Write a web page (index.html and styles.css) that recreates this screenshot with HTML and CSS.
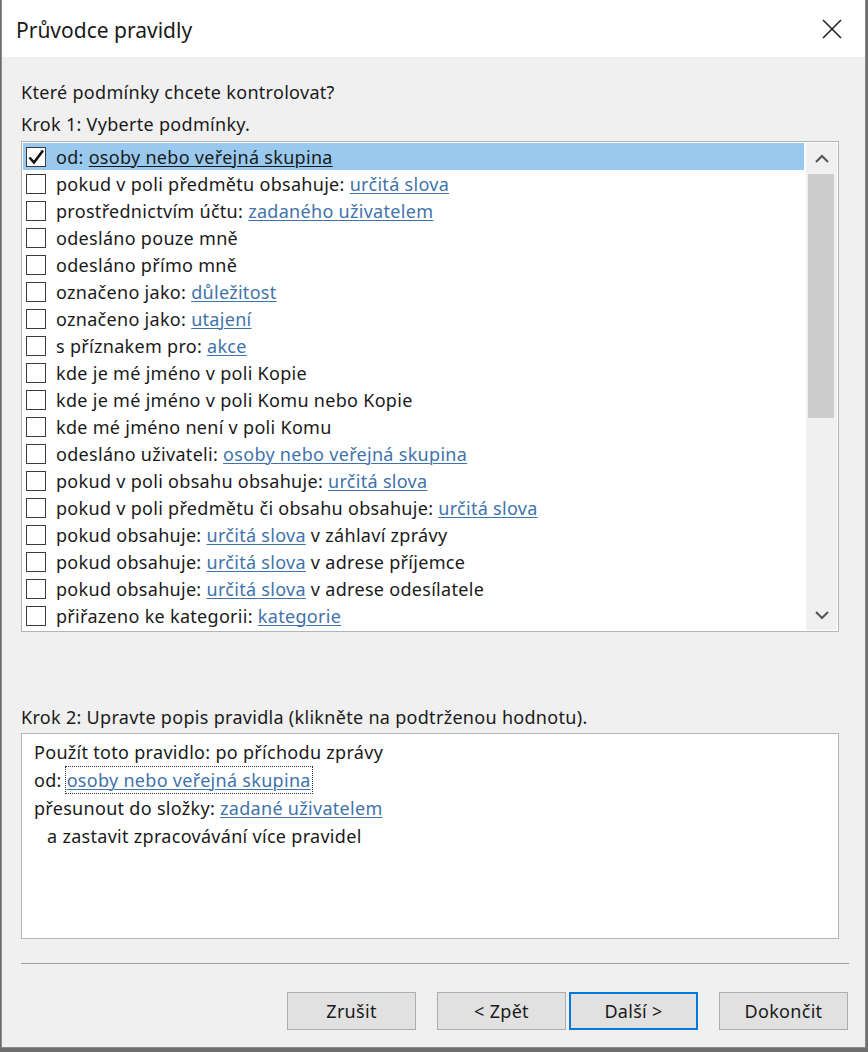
FILE: index.html
```html
<!DOCTYPE html>
<html lang="cs">
<head>
<meta charset="utf-8">
<title>Průvodce pravidly</title>
<link rel="stylesheet" href="styles.css">
</head>
<body>
<div class="window">
  <div class="titlebar">
    <span class="title">Průvodce pravidly</span>
    <svg class="close" width="20" height="20" viewBox="0 0 20 20"><path d="M1 1 L19 19 M19 1 L1 19" stroke="#1a1a1a" stroke-width="1.5" fill="none"/></svg>
  </div>
  <div class="content">
    <p class="label q">Které podmínky chcete kontrolovat?</p>
    <p class="label">Krok 1: Vyberte podmínky.</p>
    <div class="listbox">
      <ul class="rows">
        <li class="row selected"><span class="cb checked"><svg width="18" height="18" viewBox="0 0 18 18"><path d="M2.5 9.5 L7 14.5 L16 2.5" stroke="#111" stroke-width="2.6" fill="none"/></svg></span><span>od: <a class="lnk sel">osoby nebo veřejná skupina</a></span></li>
        <li class="row"><span class="cb"></span><span>pokud v poli předmětu obsahuje: <a class="lnk">určitá slova</a></span></li>
        <li class="row"><span class="cb"></span><span>prostřednictvím účtu: <a class="lnk">zadaného uživatelem</a></span></li>
        <li class="row"><span class="cb"></span><span>odesláno pouze mně</span></li>
        <li class="row"><span class="cb"></span><span>odesláno přímo mně</span></li>
        <li class="row"><span class="cb"></span><span>označeno jako: <a class="lnk">důležitost</a></span></li>
        <li class="row"><span class="cb"></span><span>označeno jako: <a class="lnk">utajení</a></span></li>
        <li class="row"><span class="cb"></span><span>s příznakem pro: <a class="lnk">akce</a></span></li>
        <li class="row"><span class="cb"></span><span>kde je mé jméno v poli Kopie</span></li>
        <li class="row"><span class="cb"></span><span>kde je mé jméno v poli Komu nebo Kopie</span></li>
        <li class="row"><span class="cb"></span><span>kde mé jméno není v poli Komu</span></li>
        <li class="row"><span class="cb"></span><span>odesláno uživateli: <a class="lnk">osoby nebo veřejná skupina</a></span></li>
        <li class="row"><span class="cb"></span><span>pokud v poli obsahu obsahuje: <a class="lnk">určitá slova</a></span></li>
        <li class="row"><span class="cb"></span><span>pokud v poli předmětu či obsahu obsahuje: <a class="lnk">určitá slova</a></span></li>
        <li class="row"><span class="cb"></span><span>pokud obsahuje: <a class="lnk">určitá slova</a> v záhlaví zprávy</span></li>
        <li class="row"><span class="cb"></span><span>pokud obsahuje: <a class="lnk">určitá slova</a> v adrese příjemce</span></li>
        <li class="row"><span class="cb"></span><span>pokud obsahuje: <a class="lnk">určitá slova</a> v adrese odesílatele</span></li>
        <li class="row"><span class="cb"></span><span>přiřazeno ke kategorii: <a class="lnk">kategorie</a></span></li>
      </ul>
      <div class="scrollbar">
        <div class="arrow"><svg width="16" height="10" viewBox="0 0 16 10"><path d="M2 8 L8 2 L14 8" stroke="#555" stroke-width="2" fill="none"/></svg></div>
        <div class="track"><div class="thumb"></div></div>
        <div class="arrow"><svg width="16" height="10" viewBox="0 0 16 10"><path d="M2 2 L8 8 L14 2" stroke="#555" stroke-width="2" fill="none"/></svg></div>
      </div>
    </div>
    <p class="label step2">Krok 2: Upravte popis pravidla (klikněte na podtrženou hodnotu).</p>
    <div class="desc">
      <div class="dline">Použít toto pravidlo: po příchodu zprávy</div>
      <div class="dline">od: <a class="lnk focus">osoby nebo veřejná skupina</a></div>
      <div class="dline">přesunout do složky: <a class="lnk">zadané uživatelem</a></div>
      <div class="dline indent">a zastavit zpracovávání více pravidel</div>
    </div>
    <div class="sep"></div>
    <div class="buttons">
      <button class="btn">Zrušit</button>
      <button class="btn gap-l">&lt; Zpět</button>
      <button class="btn default">Další &gt;</button>
      <button class="btn gap-l">Dokončit</button>
    </div>
  </div>
</div>
</body>
</html>
```

FILE: styles.css
```css
html, body {
  margin: 0;
  padding: 0;
  background: #6e6e6e;
}
body {
  width: 868px;
  height: 1052px;
  overflow: hidden;
  font-family: "Noto Sans", "Open Sans", "DejaVu Sans", sans-serif;
  color: #1a1a1a;
}
.window {
  margin-left: 1px;
  width: 865px;
  height: 1048px;
  border: 1px solid #8c8c8c;
  border-top: none;
  background: #f0f0f0;
  box-sizing: border-box;
  display: flex;
  flex-direction: column;
}
.titlebar {
  height: 57px;
  background: #ffffff;
  display: flex;
  align-items: center;
  justify-content: space-between;
  padding: 0 23px 0 14px;
  flex: none;
}
.title {
  font-size: 21px;
  color: #1a1a1a;
  position: relative;
  top: 1px;
}
.close { display: block; }
.content {
  padding: 0 18px 0 19px;
  display: flex;
  flex-direction: column;
  font-size: 18px;
  letter-spacing: 0.3px;
}
.label {
  margin: 0;
  font-size: 18px;
  line-height: 22px;
  height: 32px;
  display: flex;
  align-items: center;
}
.q { margin-top: 19px; }
.listbox {
  width: 818px;
  height: 491px;
  margin-top: 1px;
  border: 1px solid #b4b4b4;
  background: #fff;
  box-sizing: border-box;
  display: flex;
  padding: 1px;
}
.rows {
  list-style: none;
  margin: 0;
  padding: 0;
  flex: 1;
}
.row {
  height: 27px;
  display: flex;
  align-items: center;
  font-size: 18px;
  padding-left: 3px;
  white-space: nowrap;
}
.row.selected { background: #99c9ef; }
.cb {
  width: 20px;
  height: 20px;
  border: 1px solid #3c3c3c;
  background: #fff;
  margin-right: 10px;
  flex: none;
  display: flex;
  align-items: center;
  justify-content: center;
  box-sizing: border-box;
}
.cb svg { display: block; }
.lnk {
  color: #3f73aa;
  text-decoration: underline;
  text-decoration-thickness: 1px;
  text-underline-offset: 2px;
}
.lnk.sel { color: #1a1a1a; }
.scrollbar {
  width: 31px;
  margin-left: 2px;
  background: #f0f0f0;
  display: flex;
  flex-direction: column;
  flex: none;
}
.arrow {
  height: 31px;
  display: flex;
  align-items: center;
  justify-content: center;
  flex: none;
}
.track {
  flex: 1;
  padding: 0 3px 0 2px;
}
.thumb {
  height: 244px;
  background: #cdcdcd;
}
.step2 { margin-top: 69px; }
.desc {
  width: 818px;
  height: 206px;
  border: 1px solid #b4b4b4;
  background: #fff;
  box-sizing: border-box;
  padding: 4px 12px;
}
.dline {
  height: 28px;
  line-height: 28px;
  white-space: nowrap;
}
.dline.indent { padding-left: 13px; }
.focus {
  outline: 1px dotted #333;
  outline-offset: 1px;
}
.sep {
  margin-top: 24px;
  height: 1px;
  width: 828px;
  background: #a0a0a0;
}
.buttons {
  margin-top: 28px;
  display: flex;
  justify-content: flex-end;
  margin-right: -1px;
}
.btn {
  width: 129px;
  height: 38px;
  background: #e1e1e1;
  border: 1px solid #adadad;
  font-family: inherit;
  font-size: 18px;
  letter-spacing: 0.3px;
  color: #1a1a1a;
  padding: 0;
}
.btn + .btn { margin-left: 3px; }
.btn.gap-l { margin-left: 21px; }
.btn.default {
  border: 2px solid #0078d7;
}
```
